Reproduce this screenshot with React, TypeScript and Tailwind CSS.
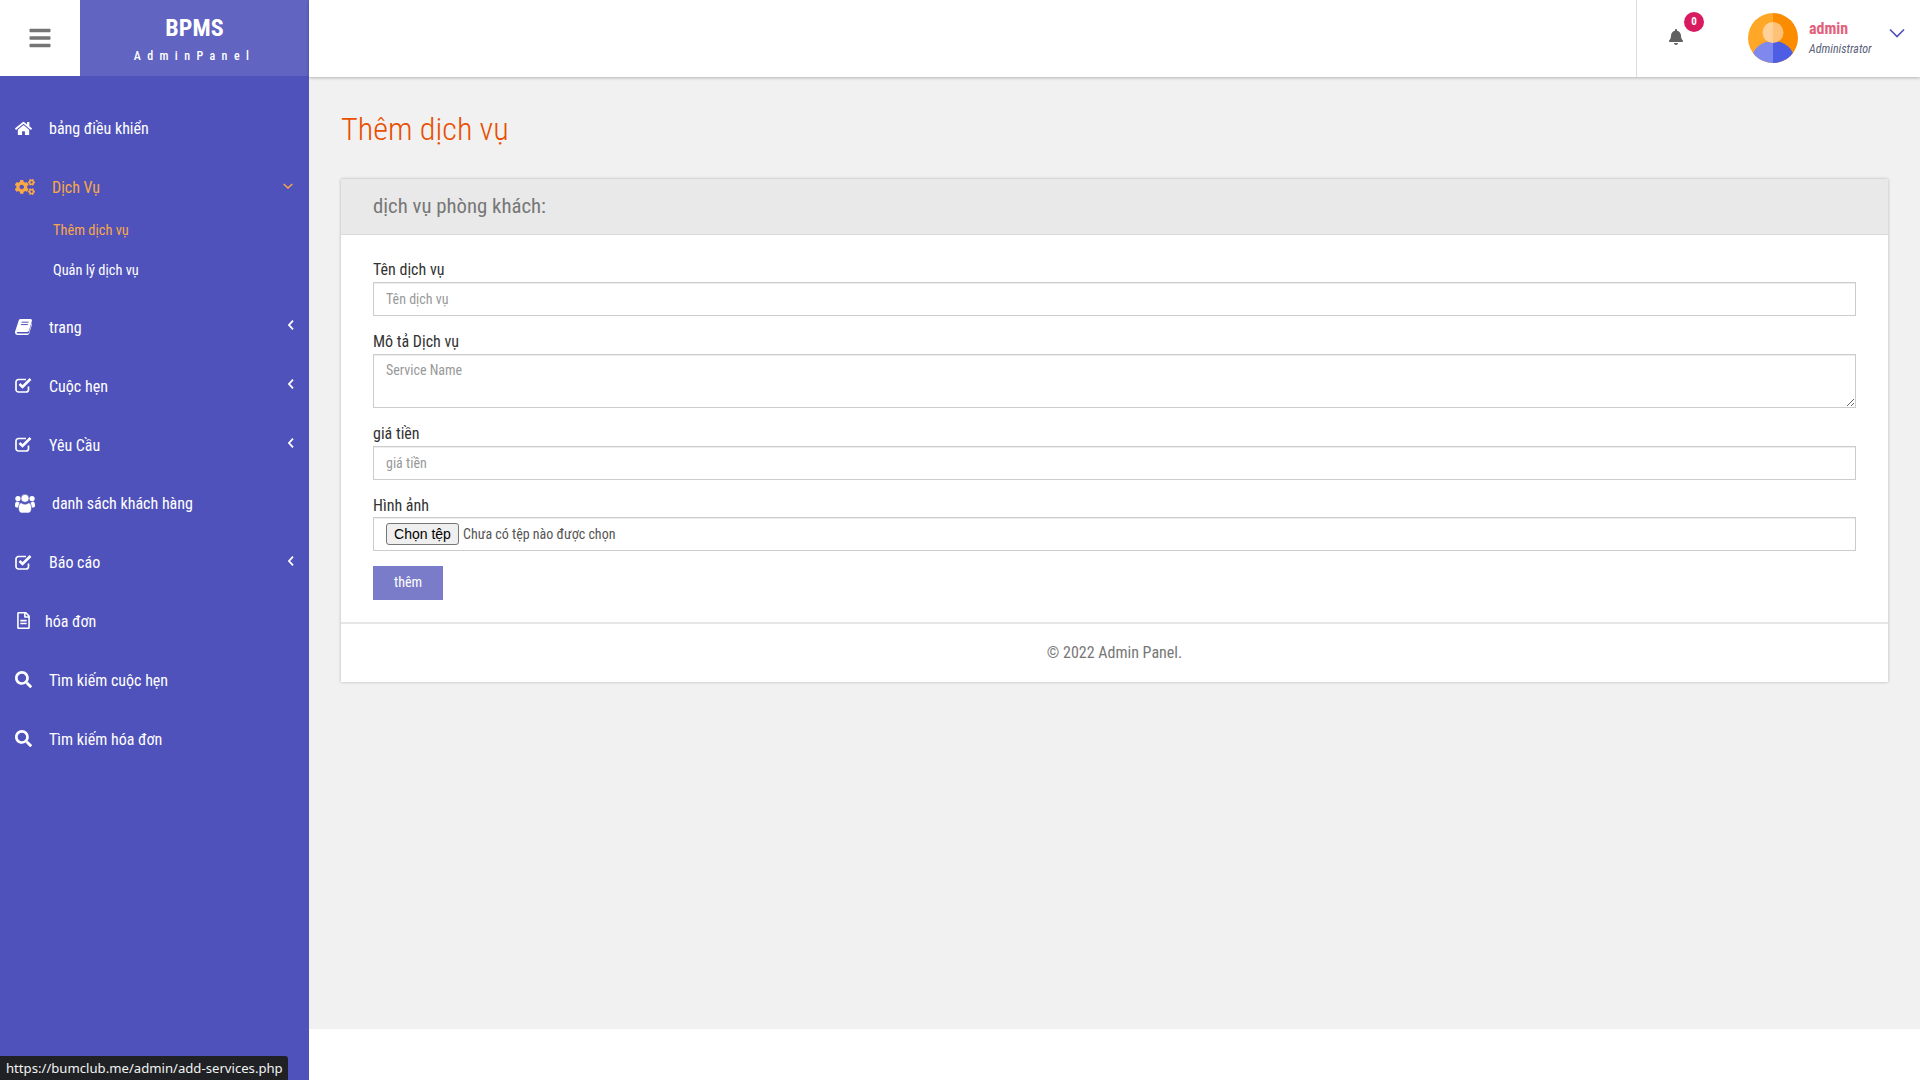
import type { ReactNode } from "react";
import { FaBars, FaBell, FaCogs, FaHome, FaRegFileAlt, FaSearch } from "react-icons/fa";

const condensed = "font-['Roboto',sans-serif] [font-stretch:75%]";

function CheckSquareIcon() {
  return (
    <svg width="17" height="15" viewBox="0 0 17 15" fill="none" stroke="currentColor">
      <path d="M13.5 8.500v3a2.500 2.500 0 0 1-2.500 2.500H3.500A2.500 2.500 0 0 1 1 11.500V4A2.500 2.500 0 0 1 3.500 1.500H11" strokeWidth="1.700" />
      <path d="M4.500 6l3 3 8-8" strokeWidth="2.600" />
    </svg>
  );
}

function BookIcon() {
  return (
    <svg width="17" height="16" viewBox="0 0 17 16" fill="currentColor">
      <path d="M3.800 1.200C4.100.4 4.700 0 5.500 0h9.900c1.200 0 1.800 1 1.500 2l-2.900 9.600c-.3 1-1 1.400-2 1.400H2.800c-.8 0-1.200.5-1 1 .1.400.5.600 1 .6h10.200c.4 0 .7-.2.800-.6l3-10c.3.300.4.800.3 1.300l-2.900 9.300c-.2.800-.9 1.400-1.800 1.400H2.500C1.200 16 .1 14.900 0 13.500c0-.4 0-.8.200-1.200z" />
      <path d="M6.500 3.200h7M5.900 5.600h7" stroke="#4f52ba" strokeWidth="1" />
    </svg>
  );
}

function UsersIcon() {
  return (
    <svg width="20" height="19" viewBox="0 0 20 19" fill="currentColor">
      <circle cx="3" cy="4.600" r="2.700" />
      <circle cx="17" cy="4.600" r="2.700" />
      <path d="M0 11c0-2 .8-3.500 2.200-3.500.6.600 1.400.9 2.400.9-.6 1.500-.9 3-.9 5H1.500C.6 13.400 0 12.800 0 12zM20 11c0-2-.8-3.500-2.200-3.500-.6.600-1.400.9-2.400.9.600 1.500.9 3 .9 5h2.200c.9 0 1.500-.6 1.500-1.400z" />
      <g stroke="#4f52ba" strokeWidth="0.600">
        <circle cx="10" cy="4.300" r="4" />
        <path d="M6.200 8.800c1 .9 2.300 1.400 3.800 1.400s2.800-.5 3.800-1.400c1.600.2 2.700 2.200 2.700 5.200 0 2.800-1.100 5-2.800 5H6.300c-1.700 0-2.800-2.200-2.800-5 0-3 1.100-5 2.700-5.200z" />
      </g>
    </svg>
  );
}

const navItems: {
  label: string;
  icon: ReactNode;
  iconBox: string;
  arrow?: boolean;
}[] = [
  { label: "trang", icon: <BookIcon />, iconBox: "w-[34px]", arrow: true },
  { label: "Cuộc hẹn", icon: <CheckSquareIcon />, iconBox: "w-[34px]", arrow: true },
  { label: "Yêu Cầu", icon: <CheckSquareIcon />, iconBox: "w-[34px]", arrow: true },
  { label: "danh sách khách hàng", icon: <UsersIcon />, iconBox: "w-[37px]" },
  { label: "Báo cáo", icon: <CheckSquareIcon />, iconBox: "w-[34px]", arrow: true },
  { label: "hóa đơn", icon: <FaRegFileAlt />, iconBox: "w-[30px]" },
  { label: "Tìm kiếm cuộc hẹn", icon: <FaSearch />, iconBox: "w-[34px]" },
  { label: "Tìm kiếm hóa đơn", icon: <FaSearch />, iconBox: "w-[34px]" },
];

function NavRow({ label, icon, iconBox, arrow }: (typeof navItems)[number]) {
  return (
    <div className="flex h-[58.8px] items-center pl-[15px] pr-[15px] text-[16px] text-white">
      <span className={`${iconBox} mb-[2px] flex shrink-0 text-[17px]`}>{icon}</span>
      <span className="flex-1">{label}</span>
      {arrow && (
        <svg width="6" height="10" viewBox="0 0 6 10" fill="none" stroke="currentColor" strokeWidth="1.800" className="mb-[5px]">
          <path d="M5 .7L1 5l4 4.300" />
        </svg>
      )}
    </div>
  );
}

function Avatar() {
  return (
    <svg width="50" height="50" viewBox="0 0 50 50" className="shrink-0">
      <defs>
        <clipPath id="avatar-clip">
          <circle cx="25" cy="25" r="25" />
        </clipPath>
      </defs>
      <g clipPath="url(#avatar-clip)">
        <rect width="25" height="50" fill="#ffa726" />
        <rect x="25" width="25" height="50" fill="#fb8c00" />
        <path d="M25 28a21 18 0 0 0-21 18v4h21z" fill="#7f88ec" />
        <path d="M25 28a21 18 0 0 1 21 18v4H25z" fill="#4e5ee4" />
        <path d="M25 9a10.500 10.500 0 0 0 0 21z" fill="#ffd199" />
        <path d="M25 9a10.500 10.500 0 0 1 0 21z" fill="#ffc078" />
      </g>
    </svg>
  );
}

export default function App() {
  return (
    <div className={`relative flex h-screen overflow-hidden bg-white ${condensed}`}>
      {/* Sidebar */}
      <aside className="flex w-[309px] shrink-0 flex-col bg-[#4f52ba]">
        <div className="flex h-[76px] shrink-0">
          <div className="flex w-[80px] items-center justify-center bg-white text-[24px] text-[#757575]">
            <FaBars />
          </div>
          <div className="flex flex-1 flex-col items-center bg-[#6164c1] pt-[13px] text-white">
            <div className="text-[24px] font-bold leading-[30px]">BPMS</div>
            <div className="mt-[6px] text-[12px] font-medium leading-[14px] tracking-[6.400px]">AdminPanel</div>
          </div>
        </div>

        <nav className="pt-[24px]">
          <NavRow label="bảng điều khiển" icon={<FaHome />} iconBox="w-[34px]" />

          <div className="flex h-[58.8px] items-center pl-[15px] pr-[16px] text-[16px] text-[#f9a847]">
            <span className="mb-[2px] flex w-[37px] shrink-0 text-[20px]">
              <FaCogs />
            </span>
            <span className="flex-1">Dịch Vụ</span>
            <svg width="10" height="6" viewBox="0 0 10 6" fill="none" stroke="currentColor" strokeWidth="1.500" className="mb-[5px]">
              <path d="M.7 1L5 5l4.300-4" />
            </svg>
          </div>

          <ul className="-mt-[7px] pb-[8px] pl-[53px] text-[14.400px]">
            <li className="flex h-[40px] items-center text-[#f9a847]">Thêm dịch vụ</li>
            <li className="flex h-[40px] items-center text-white">Quản lý dịch vụ</li>
          </ul>

          {navItems.map((item) => (
            <NavRow key={item.label} {...item} />
          ))}
        </nav>
      </aside>

      {/* Right side */}
      <div className="flex min-w-0 flex-1 flex-col">
        <header className="relative z-10 flex h-[77px] shrink-0 justify-end bg-white shadow-[0_1px_3px_rgba(0,0,0,0.25)]">
          <div className="flex w-[284px] border-l border-[#dcdcdc]">
            <div className="relative ml-[31px] mt-[29px] h-[20px] text-[16px] text-[#616161]">
              <FaBell />
              <span className="absolute left-[16px] top-[-17px] flex h-[20px] w-[20px] items-center justify-center rounded-full bg-[#d81b60] text-[11px] font-bold text-white">
                0
              </span>
            </div>
            <div className="ml-[64px] mt-[13px]">
              <Avatar />
            </div>
            <div className="ml-[11px] mt-[19px] w-[80px]">
              <div className="text-[16px] font-bold leading-[20px] text-[#e3607a]">admin</div>
              <div className="mt-[1px] text-[12px] italic leading-[18px] text-[#5a5f7a]">Administrator</div>
            </div>
            <svg width="16" height="10" viewBox="0 0 16 10" className="mt-[28px] shrink-0" fill="none" stroke="#4f52ba" strokeWidth="1.700">
              <path d="M1 1.500l7 7 7-7" />
            </svg>
          </div>
        </header>

        <main className="flex-1 bg-[#f1f1f1] px-[32px] pt-[30px]">
          <h1 className="text-[32.200px] font-light leading-[44px] text-[#e94e02]">Thêm dịch vụ</h1>

          <section className="mt-[28px] bg-white shadow-[0_0_3px_rgba(0,0,0,0.25)]">
            <div className="flex h-[56px] items-center border-b border-[#d9d9d9] bg-[#e9e9e9] px-[32px] text-[20.800px] text-[#777]">
              dịch vụ phòng khách:
            </div>

            <form className="px-[32px] pb-[22px] pt-[23px] text-[16px] text-[#333]">
              <label className="block leading-[24px]">Tên dịch vụ</label>
              <input
                placeholder="Tên dịch vụ"
                className="block h-[34px] w-full border border-[#ccc] px-[12px] text-[14px] shadow-[inset_0_1px_1px_rgba(0,0,0,0.075)] outline-none placeholder:text-[#999]"
              />

              <label className="mt-[14px] block leading-[24px]">Mô tả Dịch vụ</label>
              <textarea
                placeholder="Service Name"
                className="block h-[54px] w-full border border-[#ccc] px-[12px] py-[5px] text-[14px] leading-[20px] shadow-[inset_0_1px_1px_rgba(0,0,0,0.075)] outline-none placeholder:text-[#999]"
              />

              <label className="mt-[14px] block leading-[24px]">giá tiền</label>
              <input
                placeholder="giá tiền"
                className="block h-[34px] w-full border border-[#ccc] px-[12px] text-[14px] shadow-[inset_0_1px_1px_rgba(0,0,0,0.075)] outline-none placeholder:text-[#999]"
              />

              <label className="mt-[13px] block leading-[26px]">Hình ảnh</label>
              <div className="-mt-[2px] flex h-[34px] w-full items-center border border-[#ccc] px-[12px] text-[14px] text-[#555] shadow-[inset_0_1px_1px_rgba(0,0,0,0.075)]">
                <button
                  type="button"
                  className="h-[22px] w-[73px] rounded-[3px] border border-[#767676] bg-[#efefef] font-['Liberation_Sans',sans-serif] text-[14px] text-black"
                >
                  Chọn tệp
                </button>
                <span className="ml-[4px]">Chưa có tệp nào được chọn</span>
              </div>

              <button
                type="button"
                className="mt-[15px] block h-[34px] w-[70px] bg-[#7b7cc9] pb-[2px] text-[14px] text-white"
              >
                thêm
              </button>
            </form>

            <div className="flex h-[60px] items-center justify-center border-t-2 border-[#e6e6e6] text-[16px] text-[#777]">
              © 2022 Admin Panel.
            </div>
          </section>
        </main>

        <div className="h-[51px] shrink-0 bg-white" />
      </div>

      {/* Browser link preview */}
      <div className="absolute bottom-0 left-0 flex h-[24px] w-[288px] items-center rounded-tr-[3px] bg-[#202124] pl-[6px] pt-[1px] font-['Noto_Sans',sans-serif] text-[13.150px] text-[#f1f3f4] [font-stretch:100%]">
        https://bumclub.me/admin/add-services.php
      </div>
    </div>
  );
}
